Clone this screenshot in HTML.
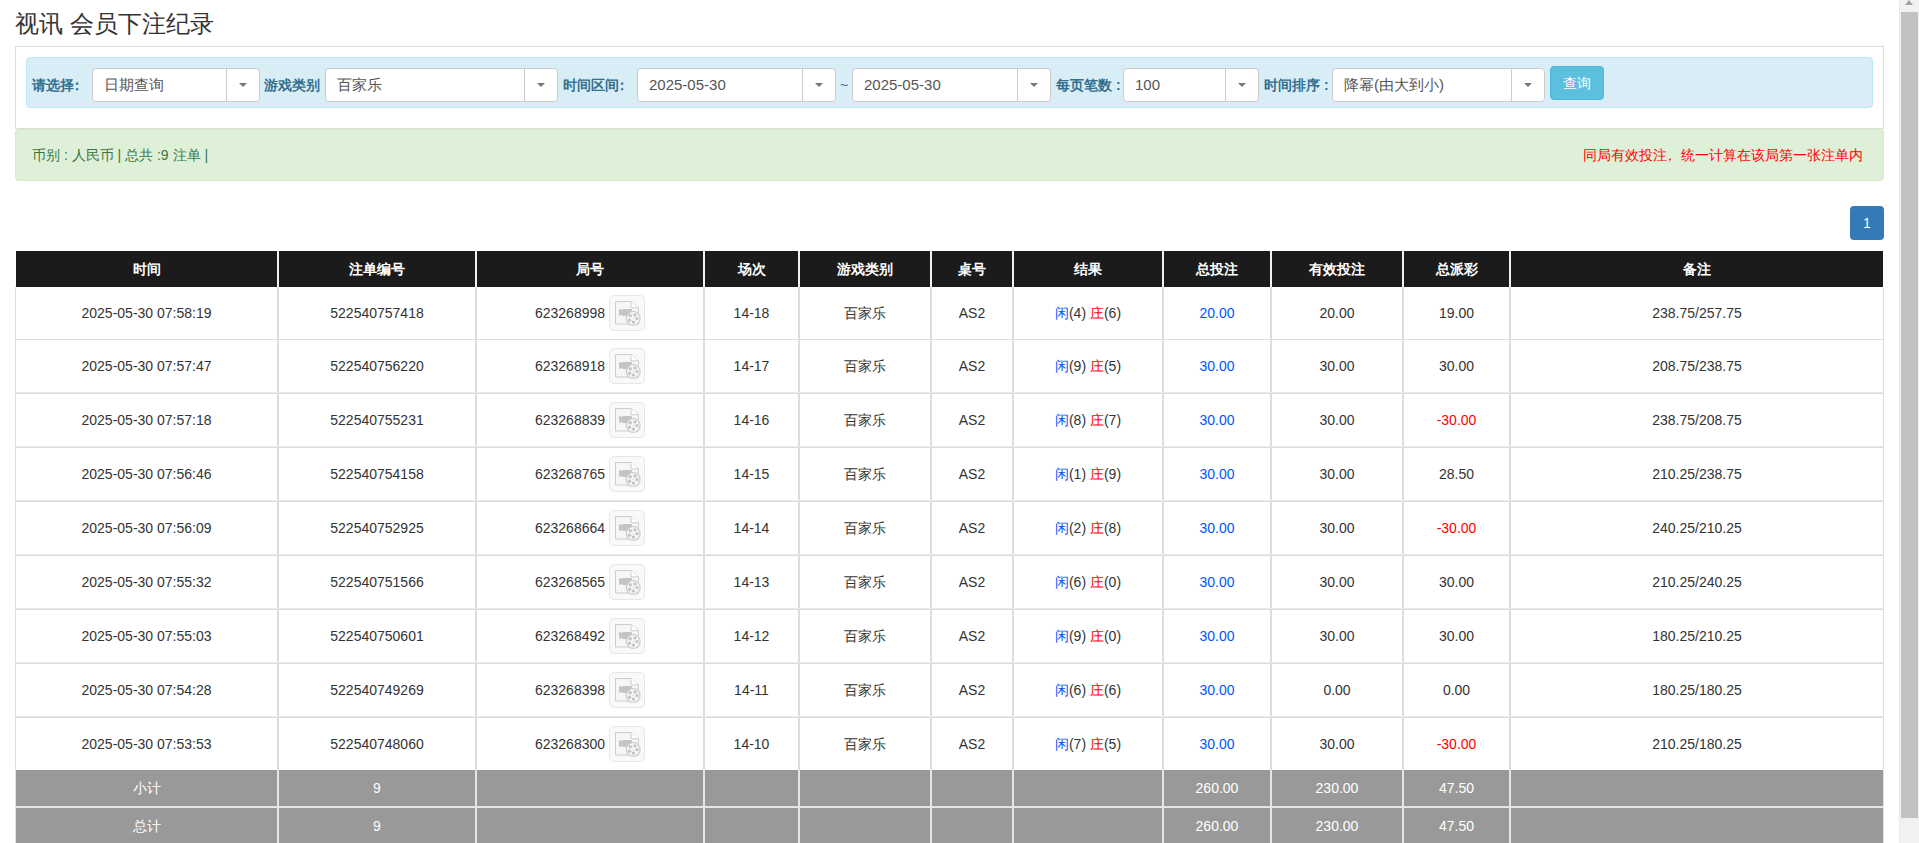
<!DOCTYPE html>
<html><head><meta charset="utf-8"><title>视讯 会员下注纪录</title>
<style>
*{box-sizing:border-box;margin:0;padding:0}
html,body{width:1919px;height:843px;overflow:hidden;background:#fff}
body{font-family:"Liberation Sans",sans-serif;font-size:14px;color:#333;position:relative}
.a{position:absolute;white-space:nowrap}
.title{left:15px;top:6px;font-size:24px;line-height:36px;color:#333}
.panel{left:15px;top:46px;width:1869px;height:83px;border:1px solid #ddd}
.info{left:26px;top:57px;width:1847px;height:51px;background:#d9edf7;border:1px solid #bce8f1;border-radius:4px}
.lbl{top:74px;line-height:22px;font-weight:bold;color:#31708f;font-size:14px}
.sel{top:68px;height:34px;background:#fff;border:1px solid #ccc;border-radius:4px}
.sel .t{position:absolute;left:11px;top:0;line-height:32px;font-size:15px;color:#555}
.sel .d{position:absolute;right:0;top:0;width:33px;height:32px;border-left:1px solid #ccc}
.sel .d:after{content:"";position:absolute;left:12px;top:14px;border-left:4px solid transparent;border-right:4px solid transparent;border-top:4px solid #777}
.btn{left:1550px;top:66px;width:54px;height:34px;background:#5bc0de;border:1px solid #46b8da;border-radius:4px;color:#fff;text-align:center;line-height:32px;font-size:14px}
.ok{left:15px;top:129px;width:1869px;height:52px;background:#dff0d8;border:1px solid #d6e9c6;border-radius:4px}
.oktxt{left:32px;top:144px;line-height:22px;color:#3c763d}
.red{left:1583px;top:144px;line-height:22px;color:#f00}
.pg{left:1850px;top:206px;width:34px;height:34px;background:#337ab7;border-radius:4px;color:#fff;text-align:center;line-height:34px}
.hd{top:251px;height:36px;background:#1b1b1b;}
.c{position:absolute;text-align:center;white-space:nowrap}
.th{color:#fff;font-weight:bold;line-height:36px}
.vl{position:absolute;width:2px}
.hl{position:absolute;height:1px;background:#ddd}
.ft{position:absolute;background:#999}
.fc{color:#fff}
.b{color:#05f}
.r{color:#f00}
.ic{display:inline-block;width:36px;height:36px;vertical-align:middle;margin-left:4px;border:1px solid #e6e6e6;border-radius:5px;background:#f9f9f9;position:relative;top:-1px}
.ic svg{position:absolute;left:-1px;top:-1px}
.sb{left:1899px;top:0;width:20px;height:843px;background:#f1f1f1;border-left:1px solid #e8e8e8}
.thumb{left:1901px;top:12px;width:17px;height:806px;background:#c1c1c1}
.arr{left:1905px;top:0;border-left:4.75px solid transparent;border-right:4.75px solid transparent;border-bottom:5px solid #a3a3a3}
</style></head><body>
<div class="a title">视讯 会员下注纪录</div>
<div class="a panel"></div>
<div class="a info"></div>

<div class="a lbl" style="left:32px">请选择<span style="position:relative;left:-4px">：</span></div>
<div class="a sel" style="left:92px;width:168px"><span class="t">日期查询</span><span class="d"></span></div>
<div class="a sel" style="left:325px;width:233px"><span class="t">百家乐</span><span class="d"></span></div>
<div class="a sel" style="left:637px;width:199px"><span class="t">2025-05-30</span><span class="d"></span></div>
<div class="a sel" style="left:852px;width:199px"><span class="t">2025-05-30</span><span class="d"></span></div>
<div class="a sel" style="left:1123px;width:136px"><span class="t">100</span><span class="d"></span></div>
<div class="a sel" style="left:1332px;width:213px"><span class="t">降幂(由大到小)</span><span class="d"></span></div>
<div class="a lbl" style="left:264px">游戏类别</div>
<div class="a lbl" style="left:563px">时间区间<span style="position:relative;left:-4px">：</span></div>
<div class="a lbl" style="left:840px;font-weight:normal">~</div>
<div class="a lbl" style="left:1056px">每页笔数 :</div>
<div class="a lbl" style="left:1264px">时间排序 :</div>
<div class="a btn">查询</div>
<div class="a ok"></div>
<div class="a oktxt">币别 : 人民币 | 总共 :9 注单 |</div>
<div class="a red">同局有效投注<span style="position:relative;left:-4px">，</span>统一计算在该局第一张注单内</div>
<div class="a pg">1</div>
<div class="a" style="left:15px;top:287px;width:1px;height:483px;background:#ddd"></div>
<div class="a" style="left:1883px;top:287px;width:1px;height:483px;background:#ddd"></div>
<div class="a" style="left:15px;top:770px;width:1px;height:73px;background:#e2e2e2"></div>
<div class="a" style="left:1883px;top:770px;width:1px;height:73px;background:#e2e2e2"></div>
<div class="a hd" style="left:16px;width:1867px"></div>
<div class="ft" style="left:16px;top:770px;width:1867px;height:36px"></div>
<div class="ft" style="left:16px;top:808px;width:1867px;height:36px"></div>
<div class="a" style="left:16px;top:806px;width:1867px;height:2px;background:#e6e6e6"></div>
<div class="vl" style="left:277px;top:251px;height:36px;background:#f0f0f0"></div>
<div class="vl" style="left:277px;top:287px;height:483px;background:#ddd"></div>
<div class="vl" style="left:277px;top:770px;height:73px;background:#e6e6e6"></div>
<div class="vl" style="left:475px;top:251px;height:36px;background:#f0f0f0"></div>
<div class="vl" style="left:475px;top:287px;height:483px;background:#ddd"></div>
<div class="vl" style="left:475px;top:770px;height:73px;background:#e6e6e6"></div>
<div class="vl" style="left:703px;top:251px;height:36px;background:#f0f0f0"></div>
<div class="vl" style="left:703px;top:287px;height:483px;background:#ddd"></div>
<div class="vl" style="left:703px;top:770px;height:73px;background:#e6e6e6"></div>
<div class="vl" style="left:798px;top:251px;height:36px;background:#f0f0f0"></div>
<div class="vl" style="left:798px;top:287px;height:483px;background:#ddd"></div>
<div class="vl" style="left:798px;top:770px;height:73px;background:#e6e6e6"></div>
<div class="vl" style="left:930px;top:251px;height:36px;background:#f0f0f0"></div>
<div class="vl" style="left:930px;top:287px;height:483px;background:#ddd"></div>
<div class="vl" style="left:930px;top:770px;height:73px;background:#e6e6e6"></div>
<div class="vl" style="left:1012px;top:251px;height:36px;background:#f0f0f0"></div>
<div class="vl" style="left:1012px;top:287px;height:483px;background:#ddd"></div>
<div class="vl" style="left:1012px;top:770px;height:73px;background:#e6e6e6"></div>
<div class="vl" style="left:1162px;top:251px;height:36px;background:#f0f0f0"></div>
<div class="vl" style="left:1162px;top:287px;height:483px;background:#ddd"></div>
<div class="vl" style="left:1162px;top:770px;height:73px;background:#e6e6e6"></div>
<div class="vl" style="left:1270px;top:251px;height:36px;background:#f0f0f0"></div>
<div class="vl" style="left:1270px;top:287px;height:483px;background:#ddd"></div>
<div class="vl" style="left:1270px;top:770px;height:73px;background:#e6e6e6"></div>
<div class="vl" style="left:1402px;top:251px;height:36px;background:#f0f0f0"></div>
<div class="vl" style="left:1402px;top:287px;height:483px;background:#ddd"></div>
<div class="vl" style="left:1402px;top:770px;height:73px;background:#e6e6e6"></div>
<div class="vl" style="left:1509px;top:251px;height:36px;background:#f0f0f0"></div>
<div class="vl" style="left:1509px;top:287px;height:483px;background:#ddd"></div>
<div class="vl" style="left:1509px;top:770px;height:73px;background:#e6e6e6"></div>
<div class="hl" style="left:15px;top:339px;width:1869px"></div>
<div class="hl" style="left:15px;top:392px;width:1869px;background:#e8e8e8"></div>
<div class="hl" style="left:15px;top:393px;width:1869px;background:#dcdcdc"></div>
<div class="hl" style="left:15px;top:446px;width:1869px;background:#e8e8e8"></div>
<div class="hl" style="left:15px;top:447px;width:1869px;background:#dcdcdc"></div>
<div class="hl" style="left:15px;top:500px;width:1869px;background:#e8e8e8"></div>
<div class="hl" style="left:15px;top:501px;width:1869px;background:#dcdcdc"></div>
<div class="hl" style="left:15px;top:554px;width:1869px;background:#e8e8e8"></div>
<div class="hl" style="left:15px;top:555px;width:1869px;background:#dcdcdc"></div>
<div class="hl" style="left:15px;top:608px;width:1869px;background:#e8e8e8"></div>
<div class="hl" style="left:15px;top:609px;width:1869px;background:#dcdcdc"></div>
<div class="hl" style="left:15px;top:662px;width:1869px;background:#e8e8e8"></div>
<div class="hl" style="left:15px;top:663px;width:1869px;background:#dcdcdc"></div>
<div class="hl" style="left:15px;top:716px;width:1869px;background:#e8e8e8"></div>
<div class="hl" style="left:15px;top:717px;width:1869px;background:#dcdcdc"></div>
<div class="c th" style="left:16px;top:251px;width:261px">时间</div>
<div class="c th" style="left:279px;top:251px;width:196px">注单编号</div>
<div class="c th" style="left:477px;top:251px;width:226px">局号</div>
<div class="c th" style="left:705px;top:251px;width:93px">场次</div>
<div class="c th" style="left:800px;top:251px;width:130px">游戏类别</div>
<div class="c th" style="left:932px;top:251px;width:80px">桌号</div>
<div class="c th" style="left:1014px;top:251px;width:148px">结果</div>
<div class="c th" style="left:1164px;top:251px;width:106px">总投注</div>
<div class="c th" style="left:1272px;top:251px;width:130px">有效投注</div>
<div class="c th" style="left:1404px;top:251px;width:105px">总派彩</div>
<div class="c th" style="left:1511px;top:251px;width:372px">备注</div>
<div class="c" style="left:16px;top:287px;width:261px;height:52px;line-height:52px">2025-05-30 07:58:19</div>
<div class="c" style="left:279px;top:287px;width:196px;height:52px;line-height:52px">522540757418</div>
<div class="c" style="left:477px;top:287px;width:226px;height:52px;line-height:52px">623268998<span class="ic"><svg width="36" height="36" viewBox="0 0 36 36"><path d="M6.5 6.5h15.5l7.5 6.3v16.2h-23z" fill="#f6f6f6" stroke="#cdcdcd" stroke-width="1"/><path d="M22 6.5v6.3h7.5" fill="#fff" stroke="#cdcdcd" stroke-width="1"/><path d="M10 14L13.3 15.1V14H22.8V21H13.3V19.7L10 21z" fill="#c4c4c4"/><circle cx="24.2" cy="23.4" r="6.9" fill="#f6f6f6" stroke="#c8c8c8" stroke-width="1.1"/><circle cx="21.2" cy="20.7" r="1.7" fill="#c4c4c4"/><circle cx="25.9" cy="19.9" r="1.7" fill="#c4c4c4"/><circle cx="28" cy="23.6" r="1.7" fill="#c4c4c4"/><circle cx="24.4" cy="27.1" r="1.7" fill="#c4c4c4"/><circle cx="20.5" cy="25.2" r="1.7" fill="#c4c4c4"/><circle cx="24.2" cy="23.5" r="0.6" fill="#c8c8c8"/></svg></span></div>
<div class="c" style="left:705px;top:287px;width:93px;height:52px;line-height:52px">14-18</div>
<div class="c" style="left:800px;top:287px;width:130px;height:52px;line-height:52px">百家乐</div>
<div class="c" style="left:932px;top:287px;width:80px;height:52px;line-height:52px">AS2</div>
<div class="c" style="left:1014px;top:287px;width:148px;height:52px;line-height:52px"><span class="b">闲</span>(4) <span class="r">庄</span>(6)</div>
<div class="c" style="left:1164px;top:287px;width:106px;height:52px;line-height:52px"><span class="b">20.00</span></div>
<div class="c" style="left:1272px;top:287px;width:130px;height:52px;line-height:52px">20.00</div>
<div class="c" style="left:1404px;top:287px;width:105px;height:52px;line-height:52px">19.00</div>
<div class="c" style="left:1511px;top:287px;width:372px;height:52px;line-height:52px">238.75/257.75</div>
<div class="c" style="left:16px;top:340px;width:261px;height:53px;line-height:53px">2025-05-30 07:57:47</div>
<div class="c" style="left:279px;top:340px;width:196px;height:53px;line-height:53px">522540756220</div>
<div class="c" style="left:477px;top:340px;width:226px;height:53px;line-height:53px">623268918<span class="ic"><svg width="36" height="36" viewBox="0 0 36 36"><path d="M6.5 6.5h15.5l7.5 6.3v16.2h-23z" fill="#f6f6f6" stroke="#cdcdcd" stroke-width="1"/><path d="M22 6.5v6.3h7.5" fill="#fff" stroke="#cdcdcd" stroke-width="1"/><path d="M10 14L13.3 15.1V14H22.8V21H13.3V19.7L10 21z" fill="#c4c4c4"/><circle cx="24.2" cy="23.4" r="6.9" fill="#f6f6f6" stroke="#c8c8c8" stroke-width="1.1"/><circle cx="21.2" cy="20.7" r="1.7" fill="#c4c4c4"/><circle cx="25.9" cy="19.9" r="1.7" fill="#c4c4c4"/><circle cx="28" cy="23.6" r="1.7" fill="#c4c4c4"/><circle cx="24.4" cy="27.1" r="1.7" fill="#c4c4c4"/><circle cx="20.5" cy="25.2" r="1.7" fill="#c4c4c4"/><circle cx="24.2" cy="23.5" r="0.6" fill="#c8c8c8"/></svg></span></div>
<div class="c" style="left:705px;top:340px;width:93px;height:53px;line-height:53px">14-17</div>
<div class="c" style="left:800px;top:340px;width:130px;height:53px;line-height:53px">百家乐</div>
<div class="c" style="left:932px;top:340px;width:80px;height:53px;line-height:53px">AS2</div>
<div class="c" style="left:1014px;top:340px;width:148px;height:53px;line-height:53px"><span class="b">闲</span>(9) <span class="r">庄</span>(5)</div>
<div class="c" style="left:1164px;top:340px;width:106px;height:53px;line-height:53px"><span class="b">30.00</span></div>
<div class="c" style="left:1272px;top:340px;width:130px;height:53px;line-height:53px">30.00</div>
<div class="c" style="left:1404px;top:340px;width:105px;height:53px;line-height:53px">30.00</div>
<div class="c" style="left:1511px;top:340px;width:372px;height:53px;line-height:53px">208.75/238.75</div>
<div class="c" style="left:16px;top:394px;width:261px;height:53px;line-height:53px">2025-05-30 07:57:18</div>
<div class="c" style="left:279px;top:394px;width:196px;height:53px;line-height:53px">522540755231</div>
<div class="c" style="left:477px;top:394px;width:226px;height:53px;line-height:53px">623268839<span class="ic"><svg width="36" height="36" viewBox="0 0 36 36"><path d="M6.5 6.5h15.5l7.5 6.3v16.2h-23z" fill="#f6f6f6" stroke="#cdcdcd" stroke-width="1"/><path d="M22 6.5v6.3h7.5" fill="#fff" stroke="#cdcdcd" stroke-width="1"/><path d="M10 14L13.3 15.1V14H22.8V21H13.3V19.7L10 21z" fill="#c4c4c4"/><circle cx="24.2" cy="23.4" r="6.9" fill="#f6f6f6" stroke="#c8c8c8" stroke-width="1.1"/><circle cx="21.2" cy="20.7" r="1.7" fill="#c4c4c4"/><circle cx="25.9" cy="19.9" r="1.7" fill="#c4c4c4"/><circle cx="28" cy="23.6" r="1.7" fill="#c4c4c4"/><circle cx="24.4" cy="27.1" r="1.7" fill="#c4c4c4"/><circle cx="20.5" cy="25.2" r="1.7" fill="#c4c4c4"/><circle cx="24.2" cy="23.5" r="0.6" fill="#c8c8c8"/></svg></span></div>
<div class="c" style="left:705px;top:394px;width:93px;height:53px;line-height:53px">14-16</div>
<div class="c" style="left:800px;top:394px;width:130px;height:53px;line-height:53px">百家乐</div>
<div class="c" style="left:932px;top:394px;width:80px;height:53px;line-height:53px">AS2</div>
<div class="c" style="left:1014px;top:394px;width:148px;height:53px;line-height:53px"><span class="b">闲</span>(8) <span class="r">庄</span>(7)</div>
<div class="c" style="left:1164px;top:394px;width:106px;height:53px;line-height:53px"><span class="b">30.00</span></div>
<div class="c" style="left:1272px;top:394px;width:130px;height:53px;line-height:53px">30.00</div>
<div class="c" style="left:1404px;top:394px;width:105px;height:53px;line-height:53px"><span class="r">-30.00</span></div>
<div class="c" style="left:1511px;top:394px;width:372px;height:53px;line-height:53px">238.75/208.75</div>
<div class="c" style="left:16px;top:448px;width:261px;height:53px;line-height:53px">2025-05-30 07:56:46</div>
<div class="c" style="left:279px;top:448px;width:196px;height:53px;line-height:53px">522540754158</div>
<div class="c" style="left:477px;top:448px;width:226px;height:53px;line-height:53px">623268765<span class="ic"><svg width="36" height="36" viewBox="0 0 36 36"><path d="M6.5 6.5h15.5l7.5 6.3v16.2h-23z" fill="#f6f6f6" stroke="#cdcdcd" stroke-width="1"/><path d="M22 6.5v6.3h7.5" fill="#fff" stroke="#cdcdcd" stroke-width="1"/><path d="M10 14L13.3 15.1V14H22.8V21H13.3V19.7L10 21z" fill="#c4c4c4"/><circle cx="24.2" cy="23.4" r="6.9" fill="#f6f6f6" stroke="#c8c8c8" stroke-width="1.1"/><circle cx="21.2" cy="20.7" r="1.7" fill="#c4c4c4"/><circle cx="25.9" cy="19.9" r="1.7" fill="#c4c4c4"/><circle cx="28" cy="23.6" r="1.7" fill="#c4c4c4"/><circle cx="24.4" cy="27.1" r="1.7" fill="#c4c4c4"/><circle cx="20.5" cy="25.2" r="1.7" fill="#c4c4c4"/><circle cx="24.2" cy="23.5" r="0.6" fill="#c8c8c8"/></svg></span></div>
<div class="c" style="left:705px;top:448px;width:93px;height:53px;line-height:53px">14-15</div>
<div class="c" style="left:800px;top:448px;width:130px;height:53px;line-height:53px">百家乐</div>
<div class="c" style="left:932px;top:448px;width:80px;height:53px;line-height:53px">AS2</div>
<div class="c" style="left:1014px;top:448px;width:148px;height:53px;line-height:53px"><span class="b">闲</span>(1) <span class="r">庄</span>(9)</div>
<div class="c" style="left:1164px;top:448px;width:106px;height:53px;line-height:53px"><span class="b">30.00</span></div>
<div class="c" style="left:1272px;top:448px;width:130px;height:53px;line-height:53px">30.00</div>
<div class="c" style="left:1404px;top:448px;width:105px;height:53px;line-height:53px">28.50</div>
<div class="c" style="left:1511px;top:448px;width:372px;height:53px;line-height:53px">210.25/238.75</div>
<div class="c" style="left:16px;top:502px;width:261px;height:53px;line-height:53px">2025-05-30 07:56:09</div>
<div class="c" style="left:279px;top:502px;width:196px;height:53px;line-height:53px">522540752925</div>
<div class="c" style="left:477px;top:502px;width:226px;height:53px;line-height:53px">623268664<span class="ic"><svg width="36" height="36" viewBox="0 0 36 36"><path d="M6.5 6.5h15.5l7.5 6.3v16.2h-23z" fill="#f6f6f6" stroke="#cdcdcd" stroke-width="1"/><path d="M22 6.5v6.3h7.5" fill="#fff" stroke="#cdcdcd" stroke-width="1"/><path d="M10 14L13.3 15.1V14H22.8V21H13.3V19.7L10 21z" fill="#c4c4c4"/><circle cx="24.2" cy="23.4" r="6.9" fill="#f6f6f6" stroke="#c8c8c8" stroke-width="1.1"/><circle cx="21.2" cy="20.7" r="1.7" fill="#c4c4c4"/><circle cx="25.9" cy="19.9" r="1.7" fill="#c4c4c4"/><circle cx="28" cy="23.6" r="1.7" fill="#c4c4c4"/><circle cx="24.4" cy="27.1" r="1.7" fill="#c4c4c4"/><circle cx="20.5" cy="25.2" r="1.7" fill="#c4c4c4"/><circle cx="24.2" cy="23.5" r="0.6" fill="#c8c8c8"/></svg></span></div>
<div class="c" style="left:705px;top:502px;width:93px;height:53px;line-height:53px">14-14</div>
<div class="c" style="left:800px;top:502px;width:130px;height:53px;line-height:53px">百家乐</div>
<div class="c" style="left:932px;top:502px;width:80px;height:53px;line-height:53px">AS2</div>
<div class="c" style="left:1014px;top:502px;width:148px;height:53px;line-height:53px"><span class="b">闲</span>(2) <span class="r">庄</span>(8)</div>
<div class="c" style="left:1164px;top:502px;width:106px;height:53px;line-height:53px"><span class="b">30.00</span></div>
<div class="c" style="left:1272px;top:502px;width:130px;height:53px;line-height:53px">30.00</div>
<div class="c" style="left:1404px;top:502px;width:105px;height:53px;line-height:53px"><span class="r">-30.00</span></div>
<div class="c" style="left:1511px;top:502px;width:372px;height:53px;line-height:53px">240.25/210.25</div>
<div class="c" style="left:16px;top:556px;width:261px;height:53px;line-height:53px">2025-05-30 07:55:32</div>
<div class="c" style="left:279px;top:556px;width:196px;height:53px;line-height:53px">522540751566</div>
<div class="c" style="left:477px;top:556px;width:226px;height:53px;line-height:53px">623268565<span class="ic"><svg width="36" height="36" viewBox="0 0 36 36"><path d="M6.5 6.5h15.5l7.5 6.3v16.2h-23z" fill="#f6f6f6" stroke="#cdcdcd" stroke-width="1"/><path d="M22 6.5v6.3h7.5" fill="#fff" stroke="#cdcdcd" stroke-width="1"/><path d="M10 14L13.3 15.1V14H22.8V21H13.3V19.7L10 21z" fill="#c4c4c4"/><circle cx="24.2" cy="23.4" r="6.9" fill="#f6f6f6" stroke="#c8c8c8" stroke-width="1.1"/><circle cx="21.2" cy="20.7" r="1.7" fill="#c4c4c4"/><circle cx="25.9" cy="19.9" r="1.7" fill="#c4c4c4"/><circle cx="28" cy="23.6" r="1.7" fill="#c4c4c4"/><circle cx="24.4" cy="27.1" r="1.7" fill="#c4c4c4"/><circle cx="20.5" cy="25.2" r="1.7" fill="#c4c4c4"/><circle cx="24.2" cy="23.5" r="0.6" fill="#c8c8c8"/></svg></span></div>
<div class="c" style="left:705px;top:556px;width:93px;height:53px;line-height:53px">14-13</div>
<div class="c" style="left:800px;top:556px;width:130px;height:53px;line-height:53px">百家乐</div>
<div class="c" style="left:932px;top:556px;width:80px;height:53px;line-height:53px">AS2</div>
<div class="c" style="left:1014px;top:556px;width:148px;height:53px;line-height:53px"><span class="b">闲</span>(6) <span class="r">庄</span>(0)</div>
<div class="c" style="left:1164px;top:556px;width:106px;height:53px;line-height:53px"><span class="b">30.00</span></div>
<div class="c" style="left:1272px;top:556px;width:130px;height:53px;line-height:53px">30.00</div>
<div class="c" style="left:1404px;top:556px;width:105px;height:53px;line-height:53px">30.00</div>
<div class="c" style="left:1511px;top:556px;width:372px;height:53px;line-height:53px">210.25/240.25</div>
<div class="c" style="left:16px;top:610px;width:261px;height:53px;line-height:53px">2025-05-30 07:55:03</div>
<div class="c" style="left:279px;top:610px;width:196px;height:53px;line-height:53px">522540750601</div>
<div class="c" style="left:477px;top:610px;width:226px;height:53px;line-height:53px">623268492<span class="ic"><svg width="36" height="36" viewBox="0 0 36 36"><path d="M6.5 6.5h15.5l7.5 6.3v16.2h-23z" fill="#f6f6f6" stroke="#cdcdcd" stroke-width="1"/><path d="M22 6.5v6.3h7.5" fill="#fff" stroke="#cdcdcd" stroke-width="1"/><path d="M10 14L13.3 15.1V14H22.8V21H13.3V19.7L10 21z" fill="#c4c4c4"/><circle cx="24.2" cy="23.4" r="6.9" fill="#f6f6f6" stroke="#c8c8c8" stroke-width="1.1"/><circle cx="21.2" cy="20.7" r="1.7" fill="#c4c4c4"/><circle cx="25.9" cy="19.9" r="1.7" fill="#c4c4c4"/><circle cx="28" cy="23.6" r="1.7" fill="#c4c4c4"/><circle cx="24.4" cy="27.1" r="1.7" fill="#c4c4c4"/><circle cx="20.5" cy="25.2" r="1.7" fill="#c4c4c4"/><circle cx="24.2" cy="23.5" r="0.6" fill="#c8c8c8"/></svg></span></div>
<div class="c" style="left:705px;top:610px;width:93px;height:53px;line-height:53px">14-12</div>
<div class="c" style="left:800px;top:610px;width:130px;height:53px;line-height:53px">百家乐</div>
<div class="c" style="left:932px;top:610px;width:80px;height:53px;line-height:53px">AS2</div>
<div class="c" style="left:1014px;top:610px;width:148px;height:53px;line-height:53px"><span class="b">闲</span>(9) <span class="r">庄</span>(0)</div>
<div class="c" style="left:1164px;top:610px;width:106px;height:53px;line-height:53px"><span class="b">30.00</span></div>
<div class="c" style="left:1272px;top:610px;width:130px;height:53px;line-height:53px">30.00</div>
<div class="c" style="left:1404px;top:610px;width:105px;height:53px;line-height:53px">30.00</div>
<div class="c" style="left:1511px;top:610px;width:372px;height:53px;line-height:53px">180.25/210.25</div>
<div class="c" style="left:16px;top:664px;width:261px;height:53px;line-height:53px">2025-05-30 07:54:28</div>
<div class="c" style="left:279px;top:664px;width:196px;height:53px;line-height:53px">522540749269</div>
<div class="c" style="left:477px;top:664px;width:226px;height:53px;line-height:53px">623268398<span class="ic"><svg width="36" height="36" viewBox="0 0 36 36"><path d="M6.5 6.5h15.5l7.5 6.3v16.2h-23z" fill="#f6f6f6" stroke="#cdcdcd" stroke-width="1"/><path d="M22 6.5v6.3h7.5" fill="#fff" stroke="#cdcdcd" stroke-width="1"/><path d="M10 14L13.3 15.1V14H22.8V21H13.3V19.7L10 21z" fill="#c4c4c4"/><circle cx="24.2" cy="23.4" r="6.9" fill="#f6f6f6" stroke="#c8c8c8" stroke-width="1.1"/><circle cx="21.2" cy="20.7" r="1.7" fill="#c4c4c4"/><circle cx="25.9" cy="19.9" r="1.7" fill="#c4c4c4"/><circle cx="28" cy="23.6" r="1.7" fill="#c4c4c4"/><circle cx="24.4" cy="27.1" r="1.7" fill="#c4c4c4"/><circle cx="20.5" cy="25.2" r="1.7" fill="#c4c4c4"/><circle cx="24.2" cy="23.5" r="0.6" fill="#c8c8c8"/></svg></span></div>
<div class="c" style="left:705px;top:664px;width:93px;height:53px;line-height:53px">14-11</div>
<div class="c" style="left:800px;top:664px;width:130px;height:53px;line-height:53px">百家乐</div>
<div class="c" style="left:932px;top:664px;width:80px;height:53px;line-height:53px">AS2</div>
<div class="c" style="left:1014px;top:664px;width:148px;height:53px;line-height:53px"><span class="b">闲</span>(6) <span class="r">庄</span>(6)</div>
<div class="c" style="left:1164px;top:664px;width:106px;height:53px;line-height:53px"><span class="b">30.00</span></div>
<div class="c" style="left:1272px;top:664px;width:130px;height:53px;line-height:53px">0.00</div>
<div class="c" style="left:1404px;top:664px;width:105px;height:53px;line-height:53px">0.00</div>
<div class="c" style="left:1511px;top:664px;width:372px;height:53px;line-height:53px">180.25/180.25</div>
<div class="c" style="left:16px;top:718px;width:261px;height:52px;line-height:52px">2025-05-30 07:53:53</div>
<div class="c" style="left:279px;top:718px;width:196px;height:52px;line-height:52px">522540748060</div>
<div class="c" style="left:477px;top:718px;width:226px;height:52px;line-height:52px">623268300<span class="ic"><svg width="36" height="36" viewBox="0 0 36 36"><path d="M6.5 6.5h15.5l7.5 6.3v16.2h-23z" fill="#f6f6f6" stroke="#cdcdcd" stroke-width="1"/><path d="M22 6.5v6.3h7.5" fill="#fff" stroke="#cdcdcd" stroke-width="1"/><path d="M10 14L13.3 15.1V14H22.8V21H13.3V19.7L10 21z" fill="#c4c4c4"/><circle cx="24.2" cy="23.4" r="6.9" fill="#f6f6f6" stroke="#c8c8c8" stroke-width="1.1"/><circle cx="21.2" cy="20.7" r="1.7" fill="#c4c4c4"/><circle cx="25.9" cy="19.9" r="1.7" fill="#c4c4c4"/><circle cx="28" cy="23.6" r="1.7" fill="#c4c4c4"/><circle cx="24.4" cy="27.1" r="1.7" fill="#c4c4c4"/><circle cx="20.5" cy="25.2" r="1.7" fill="#c4c4c4"/><circle cx="24.2" cy="23.5" r="0.6" fill="#c8c8c8"/></svg></span></div>
<div class="c" style="left:705px;top:718px;width:93px;height:52px;line-height:52px">14-10</div>
<div class="c" style="left:800px;top:718px;width:130px;height:52px;line-height:52px">百家乐</div>
<div class="c" style="left:932px;top:718px;width:80px;height:52px;line-height:52px">AS2</div>
<div class="c" style="left:1014px;top:718px;width:148px;height:52px;line-height:52px"><span class="b">闲</span>(7) <span class="r">庄</span>(5)</div>
<div class="c" style="left:1164px;top:718px;width:106px;height:52px;line-height:52px"><span class="b">30.00</span></div>
<div class="c" style="left:1272px;top:718px;width:130px;height:52px;line-height:52px">30.00</div>
<div class="c" style="left:1404px;top:718px;width:105px;height:52px;line-height:52px"><span class="r">-30.00</span></div>
<div class="c" style="left:1511px;top:718px;width:372px;height:52px;line-height:52px">210.25/180.25</div>
<div class="c fc" style="left:16px;top:770px;width:261px;height:36px;line-height:36px">小计</div>
<div class="c fc" style="left:279px;top:770px;width:196px;height:36px;line-height:36px">9</div>
<div class="c fc" style="left:1164px;top:770px;width:106px;height:36px;line-height:36px">260.00</div>
<div class="c fc" style="left:1272px;top:770px;width:130px;height:36px;line-height:36px">230.00</div>
<div class="c fc" style="left:1404px;top:770px;width:105px;height:36px;line-height:36px">47.50</div>
<div class="c fc" style="left:16px;top:808px;width:261px;height:36px;line-height:36px">总计</div>
<div class="c fc" style="left:279px;top:808px;width:196px;height:36px;line-height:36px">9</div>
<div class="c fc" style="left:1164px;top:808px;width:106px;height:36px;line-height:36px">260.00</div>
<div class="c fc" style="left:1272px;top:808px;width:130px;height:36px;line-height:36px">230.00</div>
<div class="c fc" style="left:1404px;top:808px;width:105px;height:36px;line-height:36px">47.50</div>
<div class="a sb"></div><div class="a thumb"></div><div class="a arr"></div>
</body></html>
